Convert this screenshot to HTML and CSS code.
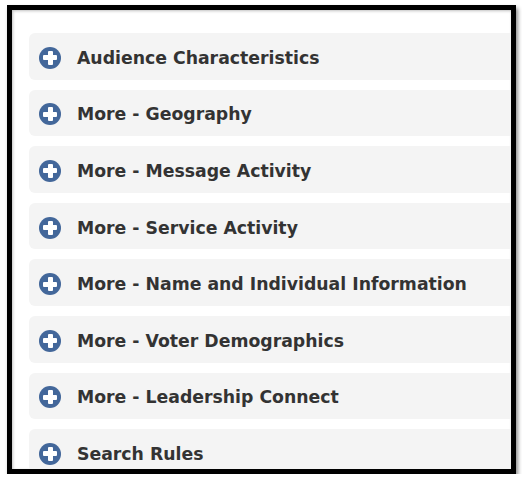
FILE: index.html
```
<!DOCTYPE html>
<html lang="en">
<head>
	<meta charset="UTF-8">
	<title>Search Criteria</title>
	<link rel="stylesheet" href="styles.css">
</head>
<body>
	<div class="frame">
		<div class="panels">
			<div class="panel"><span class="plus"></span><span class="title">Audience Characteristics</span></div>
			<div class="panel"><span class="plus"></span><span class="title">More - Geography</span></div>
			<div class="panel"><span class="plus"></span><span class="title">More - Message Activity</span></div>
			<div class="panel"><span class="plus"></span><span class="title">More - Service Activity</span></div>
			<div class="panel"><span class="plus"></span><span class="title">More - Name and Individual Information</span></div>
			<div class="panel"><span class="plus"></span><span class="title">More - Voter Demographics</span></div>
			<div class="panel"><span class="plus"></span><span class="title">More - Leadership Connect</span></div>
			<div class="panel"><span class="plus"></span><span class="title">Search Rules</span></div>
		</div>
	</div>
</body>
</html>
```
FILE: styles.css
```
	body {
		margin: 0;
		background-color: #fff;
		font-family: 'DejaVu Sans', Verdana, sans-serif;}

	.frame {
		width: 499px;
		height: 459px;
		margin: 5px 0 0 7px;
		border: 5px solid #000;
		overflow: hidden;
		box-shadow: 2px 3px 4px rgba(0,0,0,0.45), inset 1px 1px 3px rgba(0,0,0,0.25);}
	.panels {
		padding: 23px 0 0 17px;}
	.panel {
		box-sizing: border-box;
		display: flex;
		align-items: center;
		width: 520px;
		height: 46.6px;
		padding-top: 3px;
		margin-bottom: 10px;
		background-color: #f4f4f4;
		border-radius: 6px;}
	.plus {
		position: relative;
		width: 22px;
		height: 22px;
		margin: 0 16px 0 10px;
		border-radius: 50%;
		background-color: #43679a;
		flex-shrink: 0;}
	.plus::before, .plus::after {
		content: '';
		position: absolute;
		background-color: #fff;
		border-radius: 1px;}
	.plus::before {
		left: 4px; right: 4px; top: 8.5px; height: 5px;}
	.plus::after {
		top: 4px; bottom: 4px; left: 8.5px; width: 5px;}
	.title {
		font-size: 17.3px;
		font-weight: bold;
		color: #333;}
```
